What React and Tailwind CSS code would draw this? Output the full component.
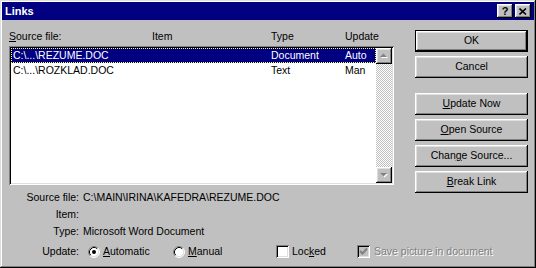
const raised =
  "shadow-[inset_-1px_-1px_0_#000,inset_1px_1px_0_#fff,inset_-2px_-2px_0_#808080,inset_2px_2px_0_#dfdfdf]";
const sunken =
  "shadow-[inset_1px_1px_0_#808080,inset_-1px_-1px_0_#fff,inset_2px_2px_0_#000,inset_-2px_-2px_0_#dfdfdf]";

const Arrow = ({ down }) => (
  <svg width="16" height="16" viewBox="0 0 16 16">
    {down ? (
      <>
        <polygon points="5,7 12,7 8.5,10.5" fill="#fff" />
        <polygon points="4,6 11,6 7.5,9.5" fill="#808080" />
      </>
    ) : (
      <>
        <polygon points="5,10 12,10 8.5,6.5" fill="#fff" />
        <polygon points="4,9 11,9 7.5,5.5" fill="#808080" />
      </>
    )}
  </svg>
);

const Radio = ({ checked }) => (
  <svg width="12" height="12" viewBox="0 0 12 12" className="shrink-0">
    <circle cx="6" cy="6" r="5" fill="#fff" />
    <path d="M2.11 9.89 A5.5 5.5 0 0 1 9.89 2.11" stroke="#808080" fill="none" />
    <path d="M9.89 2.11 A5.5 5.5 0 0 1 2.11 9.89" stroke="#fff" fill="none" />
    <path d="M2.82 9.18 A4.5 4.5 0 0 1 9.18 2.82" stroke="#000" fill="none" />
    <path d="M9.18 2.82 A4.5 4.5 0 0 1 2.82 9.18" stroke="#dfdfdf" fill="none" />
    {checked && <circle cx="6" cy="6" r="2" fill="#000" />}
  </svg>
);

const Checkbox = ({ checked, disabled }) => (
  <div
    className={`w-[13px] h-[13px] shrink-0 flex items-center justify-center ${sunken} ${
      disabled ? "bg-[#c0c0c0]" : "bg-white"
    }`}
  >
    {checked && (
      <svg width="9" height="9" viewBox="0 0 9 9">
        <path d="M1 4 L3.5 6.5 L8 1.5" stroke={disabled ? "#808080" : "#000"} strokeWidth="2" fill="none" />
      </svg>
    )}
  </div>
);

const Button = ({ children, isDefault }) => (
  <div
    className={`h-[22px] w-[113px] flex items-center justify-center bg-[#c0c0c0] ${raised} ${
      isDefault ? "border border-black" : ""
    }`}
  >
    {children}
  </div>
);

const Row = ({ selected, file, type, update }) => (
  <div
    className={`h-[15px] leading-[13px] flex border ${
      selected ? "bg-[#000080] text-white border-dotted border-[#ffff60]" : "border-transparent"
    }`}
  >
    <div className="w-[259px] pl-[1px]">{file}</div>
    <div className="w-[74px]">{type}</div>
    <div>{update}</div>
  </div>
);

export default function App() {
  return (
    <div className="w-[536px] h-[268px] bg-[#c0c0c0] p-[2px] flex flex-col text-[10.5px] text-black font-['Liberation_Sans',Arial,sans-serif] shadow-[inset_-1px_-1px_0_#000,inset_1px_1px_0_#dfdfdf,inset_-2px_-2px_0_#808080,inset_2px_2px_0_#fff] overflow-hidden">
      {/* Title bar */}
      <div className="h-[18px] bg-[#000080] flex items-center justify-between pl-[3px] pr-[3px]">
        <span className="text-white font-bold text-[11px]">Links</span>
        <div className="flex gap-[2px]">
          <div className={`w-[16px] h-[14px] bg-[#c0c0c0] flex items-center justify-center font-bold text-[11px] leading-none ${raised}`}>
            ?
          </div>
          <div className={`w-[16px] h-[14px] bg-[#c0c0c0] flex items-center justify-center ${raised}`}>
            <svg width="8" height="7" viewBox="0 0 8 7">
              <path d="M0.5 0.5 L7 6.5 M7 0.5 L0.5 6.5" stroke="#000" strokeWidth="1.6" />
            </svg>
          </div>
        </div>
      </div>

      <div className="flex">
        {/* Left column */}
        <div className="pl-[7px] pt-[10px] flex flex-col">
          <div className="h-[13px] leading-[13px] flex">
            <div className="w-[143px]">
              <span className="underline">S</span>ource file:
            </div>
            <div className="w-[119px]">Item</div>
            <div className="w-[74px]">Type</div>
            <div>Update</div>
          </div>
          <div className={`mt-[3px] w-[385px] h-[139px] bg-white p-[2px] flex ${sunken}`}>
            <div className="w-[365px] flex flex-col">
              <Row selected file={"C:\\...\\REZUME.DOC"} type="Document" update="Auto" />
              <Row file={"C:\\...\\ROZKLAD.DOC"} type="Text" update="Man" />
            </div>
            <div className="w-[16px] flex flex-col">
              <div className={`h-[16px] bg-[#c0c0c0] ${raised}`}>
                <Arrow />
              </div>
              <div className="flex-1 bg-[image:repeating-conic-gradient(#fff_0_25%,#c0c0c0_0_50%)] bg-[length:2px_2px]" />
              <div className={`h-[16px] bg-[#c0c0c0] ${raised}`}>
                <Arrow down />
              </div>
            </div>
          </div>
          <div className="mt-[4px] flex flex-col leading-[17px]">
            <div className="flex">
              <div className="w-[70px] text-right">Source file:</div>
              <div className="pl-[4px]">{"C:\\MAIN\\IRINA\\KAFEDRA\\REZUME.DOC"}</div>
            </div>
            <div className="flex">
              <div className="w-[70px] text-right">Item:</div>
            </div>
            <div className="flex">
              <div className="w-[70px] text-right">Type:</div>
              <div className="pl-[4px]">Microsoft Word Document</div>
            </div>
          </div>
        </div>

        {/* Right column */}
        <div className="ml-[21px] pt-[10px] flex flex-col gap-[4px]">
          <Button isDefault>OK</Button>
          <Button>Cancel</Button>
          <div className="mt-[11px]">
            <Button>
              <span className="underline">U</span>pdate Now
            </Button>
          </div>
          <Button>
            <span className="underline">O</span>pen Source
          </Button>
          <Button>
            Chan<span className="underline">g</span>e Source...
          </Button>
          <Button>
            <span className="underline">B</span>reak Link
          </Button>
        </div>
      </div>

      {/* Update row */}
      <div className="mt-[3px] pl-[7px] h-[17px] leading-[17px] flex items-center">
        <div className="w-[70px] text-right">Update:</div>
        <div className="ml-[9px] w-[85px] flex items-center">
          <Radio checked />
          <span className="ml-[3px]">
            <span className="underline">A</span>utomatic
          </span>
        </div>
        <div className="w-[103px] flex items-center">
          <Radio />
          <span className="ml-[3px]">
            <span className="underline">M</span>anual
          </span>
        </div>
        <div className="w-[81px] flex items-center">
          <Checkbox />
          <span className="ml-[3px]">
            Loc<span className="underline">k</span>ed
          </span>
        </div>
        <div className="flex items-center">
          <Checkbox checked disabled />
          <span className="ml-[4px] text-[#808080] [text-shadow:1px_1px_0_#fff]">Save picture in document</span>
        </div>
      </div>
    </div>
  );
}
